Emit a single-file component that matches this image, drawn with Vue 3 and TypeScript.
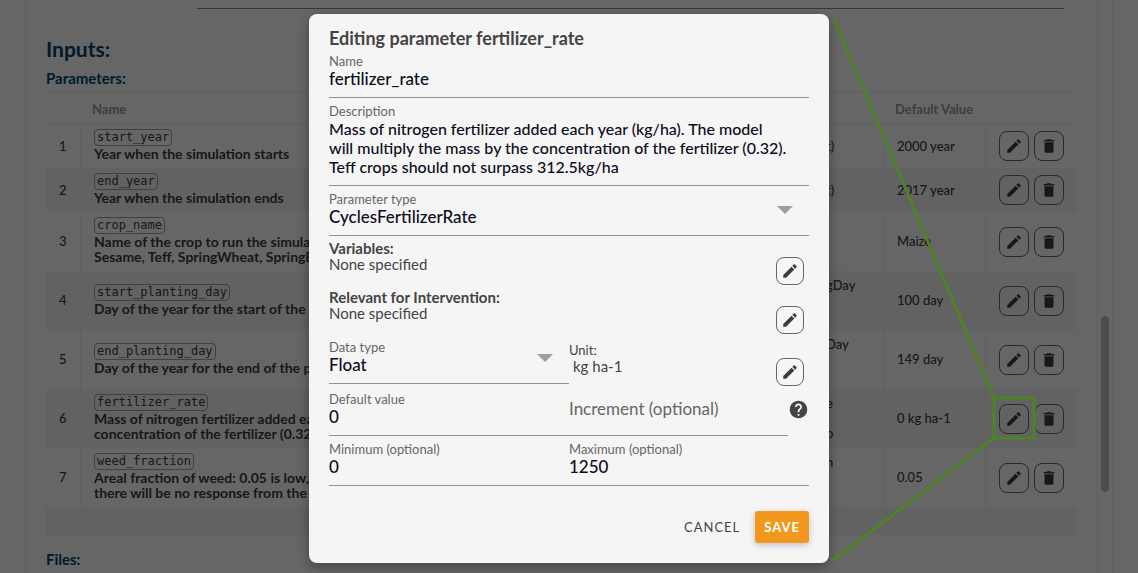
<script setup lang="ts">
import { ref } from 'vue'

interface Parameter {
  id: number
  code: string
  lines: string[]
  type: string[]
  value: string
}

const parameters: Parameter[] = [
  { id: 1, code: 'start_year', lines: ['Year when the simulation starts'], type: ['t)'], value: '2000 year' },
  { id: 2, code: 'end_year', lines: ['Year when the simulation ends'], type: ['t)'], value: '2017 year' },
  { id: 3, code: 'crop_name', lines: ['Name of the crop to run the simula', 'Sesame, Teff, SpringWheat, SpringB'], type: [], value: 'Maize' },
  { id: 4, code: 'start_planting_day', lines: ['Day of the year for the start of the p'], type: ['gDay', '', ''], value: '100 day' },
  { id: 5, code: 'end_planting_day', lines: ['Day of the year for the end of the pl'], type: ['Day', '', ''], value: '149 day' },
  { id: 6, code: 'fertilizer_rate', lines: ['Mass of nitrogen fertilizer added ea', 'concentration of the fertilizer (0.32)'], type: ['e', '', 'o'], value: '0 kg ha-1' },
  { id: 7, code: 'weed_fraction', lines: ['Areal fraction of weed: 0.05 is low, o', 'there will be no response from the'], type: ['n', '', ''], value: '0.05' },
]

const name = ref('fertilizer_rate')
const description = ref(
  'Mass of nitrogen fertilizer added each year (kg/ha). The model\nwill multiply the mass by the concentration of the fertilizer (0.32).\nTeff crops should not surpass 312.5kg/ha',
)
const parameterType = ref('CyclesFertilizerRate')
const dataType = ref('Float')
const defaultValue = ref('0')
const increment = ref('')
const minimum = ref('0')
const maximum = ref('1250')

const pencil =
  'M3 17.25V21h3.75L17.81 9.94l-3.75-3.75L3 17.25zM20.71 7.04c.39-.39.39-1.02 0-1.41l-2.34-2.34c-.39-.39-1.02-.39-1.41 0l-1.83 1.83 3.75 3.75 1.83-1.83z'
const trash = 'M6 19c0 1.1.9 2 2 2h8c1.1 0 2-.9 2-2V7H6v12zM19 4h-3.5l-1-1h-5l-1 1H5v2h14V4z'
</script>

<template>
  <div class="app">
    <main class="panel">
      <div class="rule"></div>
      <h2>Inputs:</h2>
      <h3>Parameters:</h3>
      <table>
        <colgroup>
          <col class="c-id" /><col /><col class="c-type" /><col class="c-value" /><col class="c-actions" />
        </colgroup>
        <thead>
          <tr>
            <th></th>
            <th>Name</th>
            <th></th>
            <th>Default Value</th>
            <th></th>
          </tr>
        </thead>
        <tbody>
          <tr v-for="p in parameters" :key="p.id">
            <td class="id">{{ p.id }}</td>
            <td class="name">
              <div class="code-line"><code>{{ p.code }}</code></div>
              <div v-for="line in p.lines" :key="line" class="desc">{{ line }}</div>
            </td>
            <td class="type"><div v-for="(t, i) in p.type" :key="i">{{ t }}</div></td>
            <td class="value">{{ p.value }}</td>
            <td class="actions">
              <div class="buttons">
                <button type="button" class="icon-btn" :aria-label="`Edit ${p.code}`">
                  <svg viewBox="0 0 24 24"><path :d="pencil" /></svg>
                </button>
                <button type="button" class="icon-btn" :aria-label="`Delete ${p.code}`">
                  <svg viewBox="0 0 24 24"><path :d="trash" /></svg>
                </button>
              </div>
            </td>
          </tr>
        </tbody>
        <tfoot>
          <tr><td colspan="5"></td></tr>
        </tfoot>
      </table>
      <h3 class="files">Files:</h3>
    </main>
    <div class="track"><div class="thumb"></div></div>

    <div class="overlay">
      <form class="dialog" role="dialog" aria-labelledby="dialog-title" @submit.prevent>
        <h1 id="dialog-title">Editing parameter fertilizer_rate</h1>
        <div class="field">
          <label for="f-name">Name</label>
          <input id="f-name" v-model="name" type="text" />
        </div>
        <div class="field">
          <label for="f-desc">Description</label>
          <textarea id="f-desc" v-model="description" rows="3"></textarea>
        </div>
        <div class="field select">
          <label for="f-type">Parameter type</label>
          <select id="f-type" v-model="parameterType">
            <option>CyclesFertilizerRate</option>
          </select>
          <svg class="arrow" viewBox="0 0 16 8"><path d="M0 0h16L8 8z" /></svg>
        </div>
        <div class="group">
          <div>
            <strong>Variables:</strong>
            <p>None specified</p>
          </div>
          <button type="button" class="icon-btn small" aria-label="Edit variables">
            <svg viewBox="0 0 24 24"><path :d="pencil" /></svg>
          </button>
        </div>
        <div class="group">
          <div>
            <strong>Relevant for Intervention:</strong>
            <p>None specified</p>
          </div>
          <button type="button" class="icon-btn small" aria-label="Edit interventions">
            <svg viewBox="0 0 24 24"><path :d="pencil" /></svg>
          </button>
        </div>
        <div class="row data-row">
          <div class="field select">
            <label for="f-data">Data type</label>
            <select id="f-data" v-model="dataType">
              <option>Float</option>
            </select>
            <svg class="arrow" viewBox="0 0 16 8"><path d="M0 0h16L8 8z" /></svg>
          </div>
          <div class="unit">
            <div>
              <span>Unit:</span>
              <p>kg ha-1</p>
            </div>
            <button type="button" class="icon-btn small" aria-label="Edit unit">
              <svg viewBox="0 0 24 24"><path :d="pencil" /></svg>
            </button>
          </div>
        </div>
        <div class="row">
          <div class="field">
            <label for="f-default">Default value</label>
            <input id="f-default" v-model="defaultValue" type="text" />
          </div>
          <div class="with-help">
            <div class="field empty">
              <input v-model="increment" type="text" aria-label="Increment (optional)" placeholder="Increment (optional)" />
            </div>
            <svg class="help" viewBox="0 0 24 24">
              <path d="M12 2C6.48 2 2 6.48 2 12s4.48 10 10 10 10-4.48 10-10S17.52 2 12 2zm1 17h-2v-2h2v2zm2.07-7.75l-.9.92C13.45 12.9 13 13.5 13 15h-2v-.5c0-1.1.45-2.1 1.17-2.83l1.24-1.26c.37-.36.59-.86.59-1.41 0-1.1-.9-2-2-2s-2 .9-2 2H8c0-2.21 1.79-4 4-4s4 1.79 4 4c0 .88-.36 1.68-.93 2.25z" />
            </svg>
          </div>
        </div>
        <div class="row">
          <div class="field">
            <label for="f-min">Minimum (optional)</label>
            <input id="f-min" v-model="minimum" type="text" />
          </div>
          <div class="field">
            <label for="f-max">Maximum (optional)</label>
            <input id="f-max" v-model="maximum" type="text" />
          </div>
        </div>
        <div class="dialog-actions">
          <button type="button" class="cancel">CANCEL</button>
          <button type="submit" class="save">SAVE</button>
        </div>
      </form>
    </div>

    <svg class="callout" width="210" height="550" viewBox="828 14 210 550">
      <path d="M834 19L994 398M994 438L832 561" />
      <rect x="994" y="398" width="40" height="40" />
    </svg>
  </div>
</template>

<style>
body {
  margin: 0;
  background: #fff;
}
</style>

<style scoped>
.app {
  position: relative;
  display: flex;
  height: 100vh;
  overflow: hidden;
  box-sizing: border-box;
  padding: 0 25px;
  font-family: Lato, 'Open Sans', sans-serif;
  font-size: 15px;
  color: #3c3c3c;
}
.panel {
  flex: 1;
  border: solid #eee;
  border-width: 0 1px;
  padding: 8px 20px 0;
}
.rule {
  height: 1px;
  margin: 0 13px 0 151px;
  background: #888;
}
h1, h2, h3, p {
  margin: 0;
}
h2 {
  margin-top: 28px;
  font-size: 21px;
  line-height: 24px;
  color: #063f66;
}
h3 {
  margin-top: 8px;
  font-size: 15px;
  line-height: 18px;
  color: #063f66;
}
h3.files {
  margin-top: 15px;
}
table {
  width: 100%;
  margin-top: 5px;
  table-layout: fixed;
  border-collapse: separate;
  border-spacing: 0;
}
.c-id { width: 34px; }
.c-type { width: 75px; }
.c-value { width: 102px; }
.c-actions { width: 92px; }
th {
  height: 32px;
  padding: 2px 0 0 12px;
  border: solid #efefef;
  border-width: 1px 0;
  box-sizing: border-box;
  font-size: 13px;
  text-align: left;
  color: #9a9a9a;
}
td {
  box-sizing: border-box;
  padding: 5px 0 7px 13px;
  font-size: 13px;
  font-weight: 500;
  line-height: 15px;
}
tbody td + td {
  border-left: 1px solid #efefef;
}
tbody td.type {
  border-left: 0;
}
tbody td:not(.name) {
  padding-top: 0;
  padding-bottom: 0;
}
tbody tr {
  height: 44px;
}
tbody tr:nth-child(n + 3) {
  height: 59px;
}
tbody tr:nth-child(even) td,
tfoot td {
  background: #f4f4f4;
}
tfoot td {
  height: 28px;
  padding: 0;
}
td.type {
  padding-left: 18px;
}
td.type div {
  min-height: 15px;
}
td.name {
  white-space: nowrap;
  overflow: hidden;
}
.desc {
  font-size: 14px;
  font-weight: 700;
}
.code-line {
  display: flex;
}
code {
  padding: 0 2px;
  border: 1px solid #a0a0a0;
  border-radius: 4px;
  font: 12px/15px 'DejaVu Sans Mono', monospace;
}
.buttons {
  display: flex;
  gap: 5px;
}
.icon-btn {
  display: flex;
  flex: none;
  align-items: center;
  justify-content: center;
  width: 30px;
  height: 30px;
  padding: 0;
  border: 1px solid #666;
  border-radius: 8px;
  background: transparent;
}
.icon-btn.small {
  width: 28px;
  height: 28px;
  margin-right: 5px;
}
.icon-btn svg {
  width: 18px;
  height: 18px;
  fill: #3c3c3c;
}
.track {
  width: 15px;
  padding: 316px 3px 0;
  box-sizing: border-box;
  border-right: 1px solid #eee;
}
.thumb {
  width: 8px;
  height: 176px;
  border-radius: 4px;
  background: #c1c1c1;
}
.overlay {
  position: absolute;
  inset: 0;
  display: flex;
  align-items: center;
  justify-content: center;
  padding-top: 4px;
  background: rgba(0, 0, 0, 0.6);
}
.dialog {
  width: 520px;
  box-sizing: border-box;
  padding: 14px 20px 20px;
  border-radius: 8px;
  background: #f5f5f5;
  box-shadow: 0 4px 12px rgba(0, 0, 0, 0.35);
  color: #444;
}
h1 {
  font-size: 18px;
  line-height: 20px;
}
.field {
  position: relative;
  flex: 1;
  box-sizing: border-box;
  min-width: 0;
  padding: 5px 0 9px;
  border-bottom: 1px solid #939393;
}
.field label {
  display: block;
  font-size: 13px;
  line-height: 16px;
  color: #666;
}
.field input,
.field textarea,
.field select {
  display: block;
  width: 100%;
  height: 19px;
  margin: 0;
  padding: 0;
  border: 0;
  outline: 0;
  border-radius: 0;
  background: transparent;
  appearance: none;
  font: 500 17px/19px Lato, 'Open Sans', sans-serif;
  color: #0c0c1c;
}
.field textarea {
  height: 57px;
  resize: none;
  overflow: hidden;
  font-size: 16px;
}
.arrow {
  position: absolute;
  top: 20px;
  right: 16px;
  width: 16px;
  height: 8px;
  fill: #9e9e9e;
  pointer-events: none;
}
.group,
.unit {
  display: flex;
  align-items: flex-end;
  justify-content: space-between;
  line-height: 16px;
}
.group > div {
  padding: 4px 0 13px;
}
.group strong {
  display: block;
}
.row {
  display: flex;
}
.data-row {
  height: 52px;
  align-items: flex-start;
}
.unit {
  flex: 1;
  height: 52px;
}
.unit > div {
  align-self: flex-start;
  padding-top: 8px;
}
.unit span {
  display: block;
  font-size: 13px;
}
.unit p {
  padding-left: 4px;
}
.with-help {
  display: flex;
  flex: 1;
}
.field.empty {
  padding-top: 13px;
}
.field.empty input {
  font-weight: 400;
}
.field.empty input::placeholder {
  color: #666;
  opacity: 1;
}
.help {
  width: 21px;
  height: 21px;
  margin-top: 13px;
  fill: #444;
}
.dialog-actions {
  display: flex;
  justify-content: flex-end;
  gap: 6px;
  margin-top: 25px;
}
.dialog-actions button {
  height: 32px;
  padding: 0 9px;
  border: 0;
  border-radius: 3px;
  background: transparent;
  font: 13px/16px Lato, 'Open Sans', sans-serif;
  letter-spacing: 1px;
  color: #444;
}
.dialog-actions .save {
  background: #f2991d;
  box-shadow: 0 2px 6px rgba(60, 70, 130, 0.3);
  font-weight: 700;
  color: #fff;
}
.callout {
  position: absolute;
  top: 14px;
  left: 828px;
  fill: none;
  stroke: #4f8227;
  stroke-width: 3px;
  pointer-events: none;
}
</style>
